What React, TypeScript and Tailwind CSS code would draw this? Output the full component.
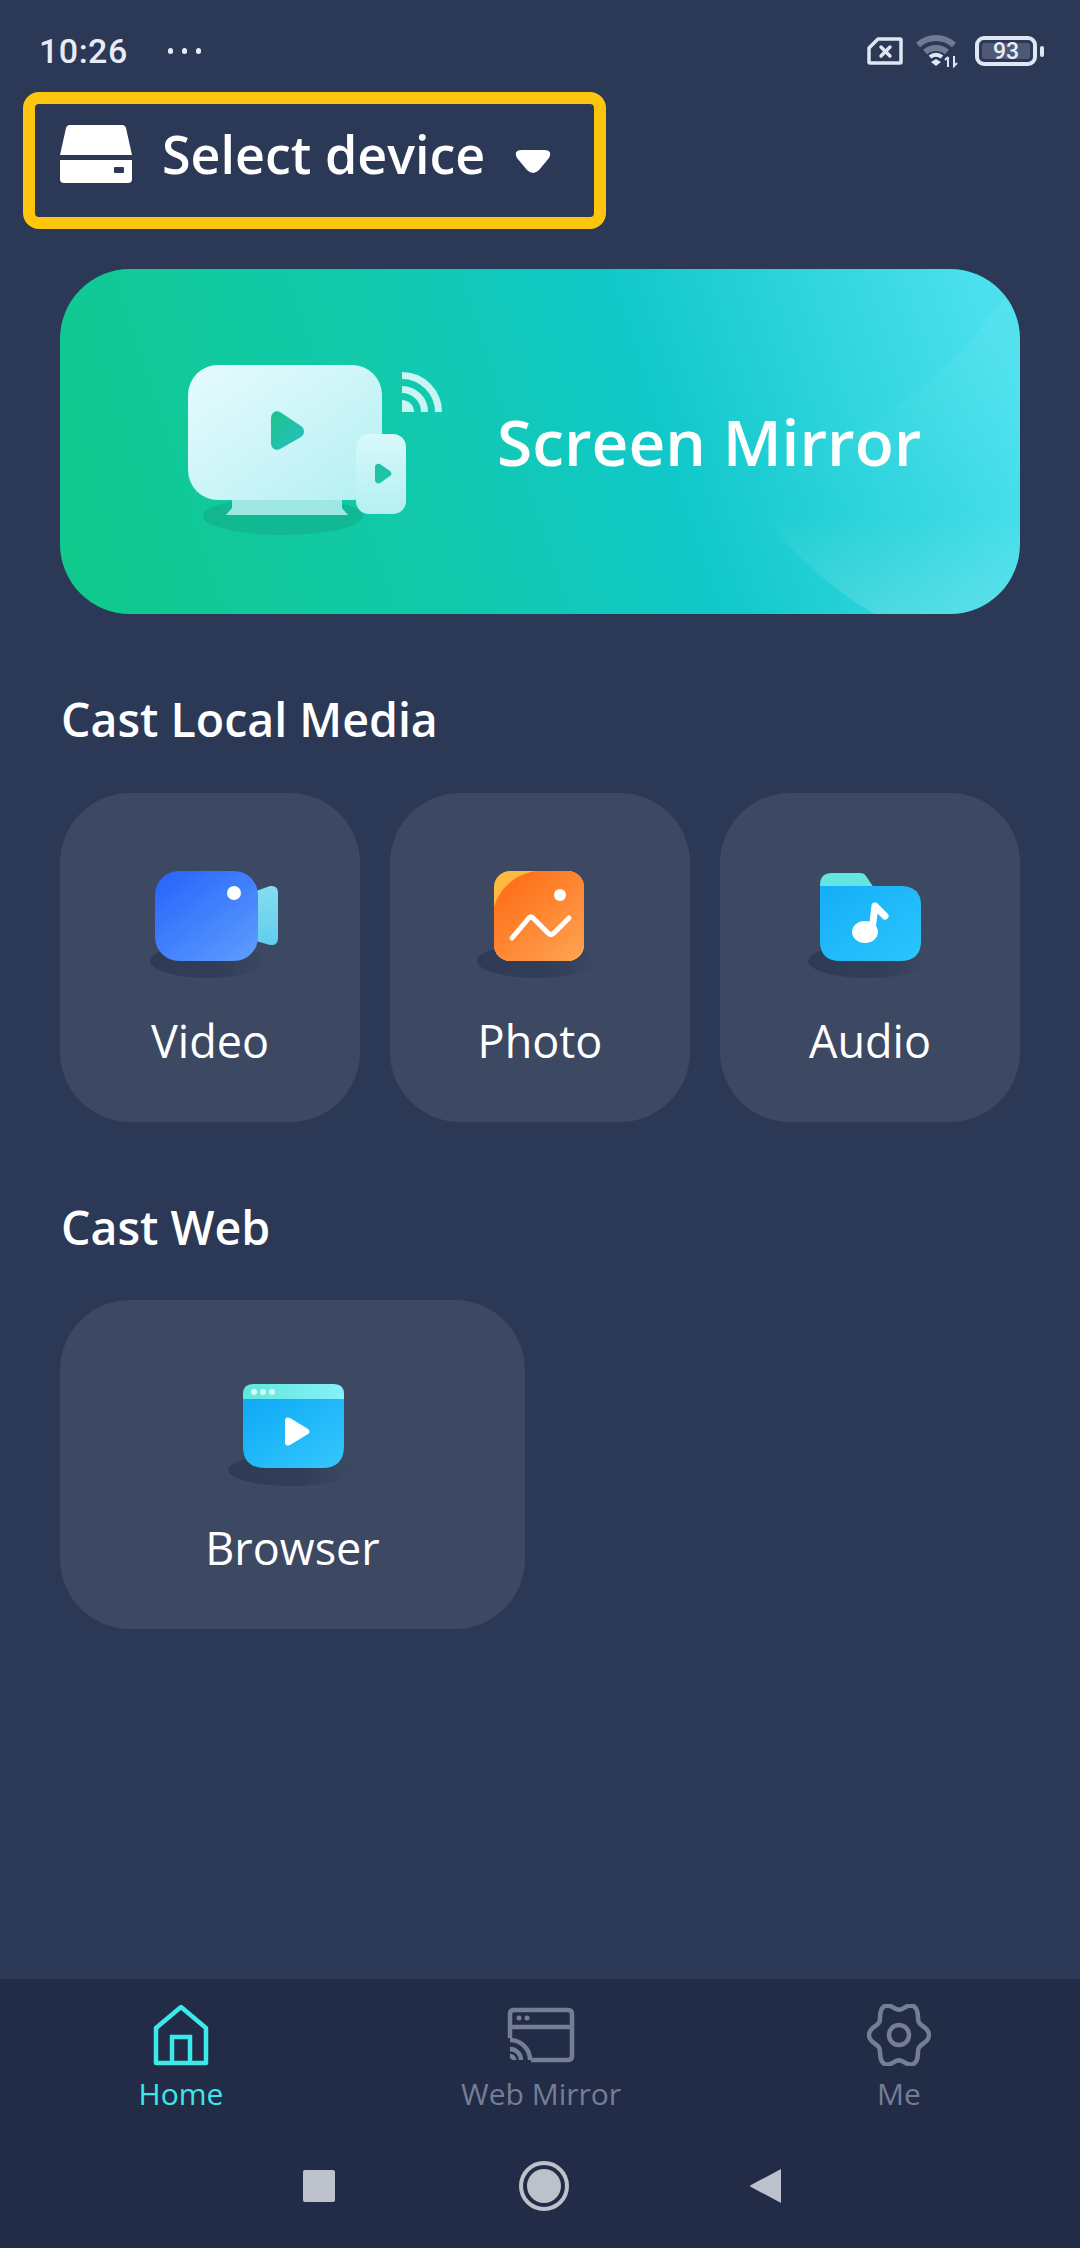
import React from "react";

const FONT = "font-['Open_Sans','Noto_Sans',sans-serif]";

function Shadow({ id, cx, cy, rx, ry }: { id: string; cx: number; cy: number; rx: number; ry: number }) {
  return (
    <>
      <defs>
        <linearGradient id={id} x1="0" y1="0" x2="1" y2="0">
          <stop offset="0" stopColor="#2f3a55" />
          <stop offset="0.6" stopColor="#323d58" />
          <stop offset="1" stopColor="#3d4862" />
        </linearGradient>
      </defs>
      <ellipse cx={cx} cy={cy} rx={rx} ry={ry} fill={`url(#${id})`} />
    </>
  );
}

function DiskIcon() {
  return (
    <svg width="72" height="58" viewBox="0 0 72 58" className="shrink-0">
      <path d="M10 0H62Q65 0 66 3L72 30H0L6 3Q7 0 10 0Z" fill="#fff" />
      <path d="M0 35H72V54Q72 58 68 58H4Q0 58 0 54Z" fill="#fff" />
      <rect x="54" y="42" width="10" height="6" rx="1" fill="#2b3856" />
    </svg>
  );
}

function MirrorArt() {
  return (
    <svg width="262" height="185" viewBox="0 0 262 185" className="block">
      <defs>
        <linearGradient id="tv" x1="0" y1="0" x2="1" y2="1">
          <stop offset="0" stopColor="#e6fbfd" />
          <stop offset="1" stopColor="#b4eff3" />
        </linearGradient>
        <linearGradient id="pl" x1="0" y1="0" x2="1" y2="1">
          <stop offset="0" stopColor="#1cc38e" />
          <stop offset="1" stopColor="#27bfc0" />
        </linearGradient>
        <linearGradient id="ph" x1="0" y1="0" x2="0" y2="1">
          <stop offset="0" stopColor="#d8f9fb" />
          <stop offset="1" stopColor="#b4eff1" />
        </linearGradient>
      </defs>
      <ellipse cx="103" cy="160" rx="80" ry="19" fill="#12ad88" opacity="0.6" />
      <path d="M52 140H162V152L168 159H46L52 152Z" fill="#9fe7e4" />
      <rect x="8" y="9" width="194" height="135" rx="30" fill="url(#tv)" />
      <path d="M91 63C91 56 96 54 100 56L121 70C125 73 125 78 121 81L100 93C96 95 91 93 91 87Z" fill="url(#pl)" />
      <rect x="176" y="78" width="50" height="80" rx="13" fill="url(#ph)" />
      <path d="M195 111C195 108 198 107 200 108L210 115C212 117 212 119 210 120L200 127C198 128 195 127 195 124Z" fill="#1fc3a5" />
      <g fill="none" stroke="#c9f5f3" strokeWidth="7">
        <path d="M222 33.5A22.5 22.5 0 0 1 244.5 56" />
        <path d="M222 19.5A36.5 36.5 0 0 1 258.5 56" />
      </g>
      <path d="M222 44A12 12 0 0 1 234 56H222Z" fill="#c9f5f3" />
    </svg>
  );
}

function VideoIcon() {
  return (
    <svg width="140" height="110" viewBox="0 0 140 110" className="overflow-visible">
      <defs>
        <linearGradient id="vb" x1="0.1" y1="0.1" x2="0.9" y2="1">
          <stop offset="0" stopColor="#2a69fb" />
          <stop offset="1" stopColor="#5c9bfd" />
        </linearGradient>
        <linearGradient id="vl" x1="0" y1="0" x2="0" y2="1">
          <stop offset="0" stopColor="#86dcef" />
          <stop offset="1" stopColor="#62cdef" />
        </linearGradient>
      </defs>
      <Shadow id="s1" cx={68} cy={96} rx={58} ry={17} />
      <path d="M116 26L130 21Q138 20 138 28V73Q138 81 130 80L116 76Z" fill="url(#vl)" />
      <rect x="15" y="6" width="103" height="90" rx="24" fill="url(#vb)" />
      <circle cx="94" cy="28" r="7" fill="#fff" />
    </svg>
  );
}

function PhotoIcon() {
  return (
    <svg width="140" height="110" viewBox="0 0 140 110" className="overflow-visible">
      <defs>
        <linearGradient id="pb" x1="0.1" y1="0.1" x2="0.9" y2="1">
          <stop offset="0" stopColor="#fe6e16" />
          <stop offset="1" stopColor="#ffa151" />
        </linearGradient>
        <clipPath id="pc">
          <rect x="24" y="6" width="90" height="90" rx="16" />
        </clipPath>
      </defs>
      <Shadow id="s2" cx={68} cy={96} rx={61} ry={17} />
      <g clipPath="url(#pc)">
        <rect x="24" y="6" width="90" height="90" fill="#ffb840" />
        <path d="M24 42C30 22 46 9 66 6H114V96H24Z" fill="url(#pb)" />
      </g>
      <circle cx="90" cy="30" r="6" fill="#fff" />
      <path d="M42 73L59 53Q61 51 63 53L78 68Q81 71 84 68L99 53" fill="none" stroke="#fff" strokeWidth="5" strokeLinecap="round" strokeLinejoin="round" />
    </svg>
  );
}

function AudioIcon() {
  return (
    <svg width="140" height="110" viewBox="0 0 140 110" className="overflow-visible">
      <defs>
        <linearGradient id="ab" x1="0" y1="0" x2="1" y2="1">
          <stop offset="0" stopColor="#14aef8" />
          <stop offset="1" stopColor="#2cc5fd" />
        </linearGradient>
      </defs>
      <Shadow id="s3" cx={68} cy={96} rx={60} ry={17} />
      <path d="M20 30V20Q20 8 32 8H60Q64 8 66 11L76 26V30Z" fill="#62e6df" />
      <path d="M20 21H100Q121 21 121 40V76Q121 96 100 96H40Q20 96 20 76Z" fill="url(#ab)" />
      <ellipse cx="65" cy="67" rx="13" ry="11" fill="#fff" />
      <path d="M72 65L75 41L85 51" fill="none" stroke="#fff" strokeWidth="7" strokeLinecap="round" strokeLinejoin="round" />
    </svg>
  );
}

function BrowserIcon() {
  return (
    <svg width="140" height="110" viewBox="0 0 140 110" className="overflow-visible">
      <defs>
        <linearGradient id="bb" x1="0" y1="0" x2="1" y2="1">
          <stop offset="0" stopColor="#0eaaf7" />
          <stop offset="1" stopColor="#35c7fd" />
        </linearGradient>
        <linearGradient id="bh" x1="0" y1="0" x2="1" y2="0">
          <stop offset="0" stopColor="#5fe9da" />
          <stop offset="1" stopColor="#86f0fa" />
        </linearGradient>
      </defs>
      <Shadow id="s4" cx={68} cy={98} rx={63} ry={16} />
      <path d="M20 29V22Q20 12 30 12H111Q121 12 121 22V29Z" fill="url(#bh)" />
      <path d="M20 27H121V74Q121 96 99 96H42Q20 96 20 74Z" fill="url(#bb)" />
      <circle cx="31" cy="20" r="3" fill="#d8fbf7" />
      <circle cx="40" cy="20" r="3" fill="#d8fbf7" />
      <circle cx="49" cy="20" r="3" fill="#d8fbf7" />
      <path d="M62 49Q62 44 67 46L85 57Q88 60 85 62L67 73Q62 75 62 70Z" fill="#fff" />
    </svg>
  );
}

function Tile({ label, icon, className }: { label: string; icon: React.ReactNode; className?: string }) {
  return (
    <div className={`h-[329px] rounded-[70px] bg-[#3d4862] flex flex-col items-center pt-[72px] ${className ?? ""}`}>
      {icon}
      <div className="mt-[36px] text-[45px] leading-[60px] text-white">{label}</div>
    </div>
  );
}

function StatusIcons() {
  return (
    <div className="flex items-center mt-[3px]">
      <svg width="36" height="28" viewBox="0 0 36 28">
        <path d="M11 2H33Q34 2 34 3V25Q34 26 33 26H3Q2 26 2 25V11Z" fill="none" stroke="#dfe5f2" strokeWidth="3.5" strokeLinejoin="round" />
        <path d="M14 10L23 19M23 10L14 19" stroke="#dfe5f2" strokeWidth="3.5" strokeLinecap="round" />
      </svg>
      <svg width="44" height="34" viewBox="0 0 44 34" className="ml-[12px]">
        <path d="M3 11A27 27 0 0 1 39 11" fill="none" stroke="#6f7a93" strokeWidth="6" />
        <path d="M10 18A17 17 0 0 1 32 18" fill="none" stroke="#6f7a93" strokeWidth="6" />
        <path d="M15 23A9 9 0 0 1 27 23" fill="none" stroke="#dfe5f2" strokeWidth="4" />
        <path d="M16 28L21 25L26 28L21 32Z" fill="#dfe5f2" />
        <path d="M33 23V33M30 26L33 23M39 22V32L42 29" fill="none" stroke="#dfe5f2" strokeWidth="2" />
      </svg>
      <div className="ml-[16px] flex items-center">
        <div className="w-[62px] h-[30px] rounded-[9px] border-[4px] border-[#dfe5f2] p-[3px] flex">
          <div className="w-full rounded-[3px] bg-[#4e5a75] flex items-center justify-center text-[#e8edf6] text-[23px] leading-none font-medium font-['Roboto',sans-serif]">
            93
          </div>
        </div>
        <div className="w-[4px] h-[11px] ml-[3px] rounded-[2px] bg-[#dfe5f2]" />
      </div>
    </div>
  );
}

function NavItem({ label, active, icon }: { label: string; active?: boolean; icon: React.ReactNode }) {
  return (
    <div className="flex flex-col items-center w-[200px]">
      <div className="h-[64px] flex items-center justify-center">{icon}</div>
      <div className={`mt-[8px] text-[30px] leading-[38px] font-medium ${active ? "text-[#3de8ea]" : "text-[#747e96]"}`}>{label}</div>
    </div>
  );
}

const gearPath = (() => {
  const pts: string[] = [];
  for (let i = 0; i < 120; i++) {
    const t = (i / 120) * Math.PI * 2;
    const r = 26.5 + 3.5 * Math.cos(6 * t);
    pts.push(`${(32 + r * Math.cos(t)).toFixed(2)} ${(30 + 1.1 * r * Math.sin(t)).toFixed(2)}`);
  }
  return `M${pts.join("L")}Z`;
})();

export default function App() {
  return (
    <div className={`w-[1080px] h-[2248px] bg-[#2b3856] flex flex-col ${FONT}`}>
      <div className="h-[92px] shrink-0 pl-[39px] pr-[36px] pt-[31px] flex items-start justify-between">
        <div className="flex items-center h-[40px]">
          <span className="text-[#e6ebf5] text-[34px] leading-none font-medium font-['Roboto',sans-serif] tracking-[0.5px]">10:26</span>
          <div className="ml-[40px] flex gap-[9px]">
            <div className="w-[5px] h-[6px] rounded-full bg-[#e6ebf5]" />
            <div className="w-[5px] h-[6px] rounded-full bg-[#e6ebf5]" />
            <div className="w-[5px] h-[6px] rounded-full bg-[#e6ebf5]" />
          </div>
        </div>
        <StatusIcons />
      </div>

      <div className="ml-[23px] w-[583px] h-[137px] shrink-0 rounded-[16px] border-[12px] border-[#fec50f] flex items-center pl-[25px] pb-[14px]">
        <DiskIcon />
        <div className="ml-[30px] text-[52px] leading-[68px] font-semibold text-white">Select device</div>
        <svg width="36" height="24" viewBox="0 0 36 24" className="ml-[30px] mt-[16px]">
          <path d="M7 0H29Q38 0 34 8L24 20Q18 26 12 20L2 8Q-2 0 7 0Z" fill="#fff" />
        </svg>
      </div>

      <div className="relative overflow-hidden mx-[60px] mt-[40px] h-[345px] shrink-0 rounded-[70px] bg-[linear-gradient(72deg,#10c98a_0%,#12c9ab_36%,#11c8ca_62%,#4be0ee_96%)] flex items-center pl-[120px]">
        <svg className="absolute inset-0" width="960" height="345" viewBox="0 0 960 345">
          <defs>
            <linearGradient id="hl1" x1="0" y1="0" x2="0" y2="1">
              <stop offset="0" stopColor="#ffffff" stopOpacity="0.07" />
              <stop offset="1" stopColor="#ffffff" stopOpacity="0" />
            </linearGradient>
            <linearGradient id="hl2" x1="0" y1="0" x2="0" y2="1">
              <stop offset="0" stopColor="#ffffff" stopOpacity="0" />
              <stop offset="1" stopColor="#ffffff" stopOpacity="0.16" />
            </linearGradient>
          </defs>
          <path d="M960 0V230H640Q850 170 950 20Z" fill="url(#hl1)" />
          <path d="M700 245Q760 315 815 345H960V245Z" fill="url(#hl2)" />
        </svg>
        <div className="relative w-[262px] h-[185px] shrink-0 mt-[14px]">
          <MirrorArt />
        </div>
        <div className="relative ml-[55px] text-[64px] leading-[88px] font-semibold text-white">Screen Mirror</div>
      </div>

      <div className="mx-[61px] mt-[73px] text-[46.5px] leading-[64px] font-semibold text-white">Cast Local Media</div>
      <div className="mx-[60px] mt-[42px] grid grid-cols-3 gap-[30px]">
        <Tile label="Video" icon={<VideoIcon />} />
        <Tile label="Photo" icon={<PhotoIcon />} />
        <Tile label="Audio" icon={<AudioIcon />} />
      </div>

      <div className="mx-[61px] mt-[73px] text-[46.5px] leading-[64px] font-semibold text-white">Cast Web</div>
      <div className="mx-[60px] mt-[41px]">
        <Tile label="Browser" icon={<BrowserIcon />} className="w-[465px]" />
      </div>

      <div className="flex-1" />

      <div className="h-[269px] shrink-0 bg-[#232c47] flex flex-col">
        <div className="flex pt-[24px] pl-[81px] gap-[160px]">
          <NavItem
            label="Home"
            active
            icon={
              <svg width="56" height="62" viewBox="0 0 56 62" fill="none" stroke="#3de8ea" strokeWidth="4.5">
                <path d="M3 59V24L28 3L53 24V59Z" strokeLinejoin="round" />
                <path d="M19 59V33H37V59" />
              </svg>
            }
          />
          <NavItem
            label="Web Mirror"
            icon={
              <svg width="68" height="56" viewBox="0 0 68 56" fill="none" stroke="#747e96" strokeWidth="4.5">
                <path d="M3 31V7Q3 3 7 3H61Q65 3 65 7V49Q65 53 61 53H24" />
                <path d="M3 20H65" />
                <circle cx="12" cy="11" r="2.5" fill="#747e96" stroke="none" />
                <circle cx="20" cy="11" r="2.5" fill="#747e96" stroke="none" />
                <path d="M3 33A20 20 0 0 1 23 53" />
                <path d="M3 42A11 11 0 0 1 14 53" />
                <path d="M3 49A4 4 0 0 1 7 53" />
              </svg>
            }
          />
          <div className="ml-[-2px]">
            <NavItem
              label="Me"
              icon={
                <svg width="64" height="62" viewBox="0 0 64 60" fill="none" stroke="#747e96" strokeWidth="4.5" strokeLinejoin="round">
                  <path d={gearPath} />
                  <circle cx="32" cy="30" r="10" />
                </svg>
              }
            />
          </div>
        </div>
        <div className="mt-[48px] flex items-center pl-[303px]">
          <div className="w-[32px] h-[32px] rounded-[2px] bg-[#bcc1cb]" />
          <div className="ml-[184px] w-[50px] h-[50px] rounded-full border-[4px] border-[#bcc1cb] p-[4px]">
            <div className="w-full h-full rounded-full bg-[#bcc1cb]" />
          </div>
          <svg width="34" height="38" viewBox="0 0 34 38" className="ml-[180px]">
            <path d="M32 2V36L2 20Q0 19 2 18Z" fill="#bcc1cb" />
          </svg>
        </div>
      </div>
    </div>
  );
}
